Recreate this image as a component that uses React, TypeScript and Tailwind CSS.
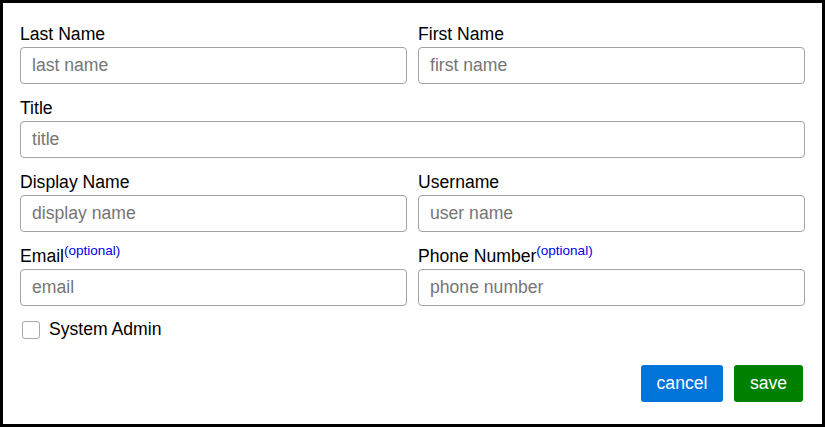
import * as React from "react";

type FieldProps = {
  label: string;
  placeholder: string;
  optional?: boolean;
  wide?: boolean;
};

function Field({ label, placeholder, optional, wide }: FieldProps) {
  return (
    <div className={`flex flex-col ${wide ? "col-span-2" : ""}`}>
      <label className="mb-[2px] h-[21px] text-[17.6px] leading-[21px] text-black">
        {label}
        {optional ? (
          <span className="relative -top-[7px] text-[13.5px] leading-none text-[#0000ee]">(optional)</span>
        ) : null}
      </label>
      <input
        type="text"
        placeholder={placeholder}
        className="h-[37px] w-full rounded-[4px] border border-[#a3a3a3] bg-white px-[11px] text-[17.6px] text-black outline-none placeholder:text-[#767676]"
      />
    </div>
  );
}

export default function App() {
  return (
    <div
      className="box-border flex h-[427px] w-[825px] flex-col border-[3px] border-black bg-white px-[17px] pt-[21px]"
      style={{ fontFamily: '"Liberation Sans", Arial, sans-serif' }}
    >
      <div className="grid grid-cols-2 gap-x-[11px] gap-y-[14px]">
        <Field label="Last Name" placeholder="last name" />
        <Field label="First Name" placeholder="first name" />
        <Field label="Title" placeholder="title" wide />
        <Field label="Display Name" placeholder="display name" />
        <Field label="Username" placeholder="user name" />
        <Field label="Email" placeholder="email" optional />
        <Field label="Phone Number" placeholder="phone number" optional />
      </div>

      <label className="mt-[13px] flex h-[21px] items-center gap-[9px] pl-[2px] text-[17.6px] leading-[21px] text-black">
        <span className="box-border h-[18px] w-[18px] rounded-[3px] border border-[#a8a8a8] bg-white" />
        System Admin
      </label>

      <div className="mt-[25px] flex justify-end gap-[11px] pr-[2px]">
        <button
          type="button"
          className="h-[37px] w-[82px] rounded-[3px] bg-[#0074d9] text-[17.6px] text-white"
        >
          cancel
        </button>
        <button
          type="button"
          className="h-[37px] w-[69px] rounded-[3px] bg-[#008000] text-[17.6px] text-white"
        >
          save
        </button>
      </div>
    </div>
  );
}
